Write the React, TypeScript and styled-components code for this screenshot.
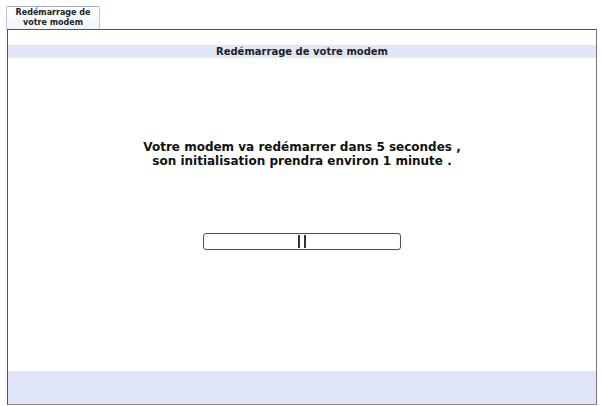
import styled, { createGlobalStyle } from "styled-components"

const Global = createGlobalStyle`
  html, body {
    margin: 0;
    padding: 0;
    background: #fff;
  }
  body {
    font-family: "DejaVu Sans", Verdana, sans-serif;
    color: #111;
  }
`

const Page = styled.div`
  display: flex;
  flex-direction: column;
  width: 601px;
  height: 406px;
`

const Tabs = styled.div`
  display: flex;
  padding: 6px 0 0 6px;
  height: 23px;
`

const Tab = styled.div`
  box-sizing: border-box;
  width: 94px;
  height: 24px;
  border: 1px solid #c0c4dc;
  border-top-color: #a8acd0;
  border-bottom: none;
  border-radius: 2px 2px 0 0;
  background: linear-gradient(#ffffff, #f2f3f8);
  font-size: 8px;
  font-weight: bold;
  line-height: 10px;
  text-align: center;
  padding-top: 1px;
  color: #222;
`

const Panel = styled.div`
  box-sizing: border-box;
  margin: 0 4px 1px 7px;
  flex: 1;
  display: flex;
  flex-direction: column;
  border: 1px solid #555;
  border-right-color: #777;
  border-bottom-color: #888;
  padding-top: 15px;
`

const Header = styled.div`
  height: 13px;
  background: #e2e6f9;
  font-size: 10px;
  font-weight: bold;
  line-height: 13px;
  text-align: center;
  color: #222;
`

const Body = styled.div`
  flex: 1;
  display: flex;
  flex-direction: column;
  align-items: center;
  padding-top: 82px;
`

const Message = styled.p`
  margin: 0;
  font-size: 12px;
  font-weight: bold;
  line-height: 14px;
  text-align: center;
  color: #111;
`

const Progress = styled.div`
  box-sizing: border-box;
  margin-top: 65px;
  width: 198px;
  height: 17px;
  border: 1px solid #5a4a50;
  border-radius: 3px;
  display: flex;
  align-items: center;
  justify-content: center;
  gap: 4px;
`

const Tick = styled.span`
  width: 2px;
  height: 13px;
  background: #333;
`

const Footer = styled.div`
  height: 33px;
  background: #e0e4f8;
`

export default function App() {
  return (
    <Page>
      <Global />
      <Tabs>
        <Tab>
          Redémarrage de
          <br />
          votre modem
        </Tab>
      </Tabs>
      <Panel>
        <Header>Redémarrage de votre modem</Header>
        <Body>
          <Message>
            Votre modem va redémarrer dans 5 secondes ,
            <br />
            son initialisation prendra environ 1 minute .
          </Message>
          <Progress>
            <Tick />
            <Tick />
          </Progress>
        </Body>
        <Footer />
      </Panel>
    </Page>
  )
}
